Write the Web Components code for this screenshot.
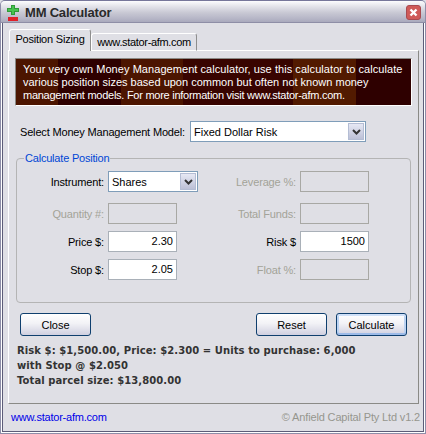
<!DOCTYPE html>
<html>
<head>
<meta charset="utf-8">
<title>MM Calculator</title>
<style>
  html, body { margin: 0; padding: 0; background: #dfdfe5; }
  body { font: 11px "Liberation Sans", Arial, sans-serif; color: #000; }
  mm-banner span { display: block; white-space: nowrap; }
</style>
</head>
<body>
<mm-window>
  <mm-tabs>
    <mm-banner>
      <span style="letter-spacing:.06px">Your very own Money Management calculator, use this calculator to calculate</span>
      <span>various position sizes based upon common but often not known money</span>
      <span style="letter-spacing:-.26px">management models. For more information visit www.stator-afm.com.</span>
    </mm-banner>
    <mm-model></mm-model>
    <mm-group>
      <mm-field label="Instrument:"><mm-select value="Shares" width="90"></mm-select></mm-field>
      <mm-field label="Leverage %:" disabled></mm-field>
      <mm-field label="Quantity #:" disabled></mm-field>
      <mm-field label="Total Funds:" disabled></mm-field>
      <mm-field label="Price $:" value="2.30"></mm-field>
      <mm-field label="Risk $" value="1500"></mm-field>
      <mm-field label="Stop $:" value="2.05"></mm-field>
      <mm-field label="Float %:" disabled></mm-field>
    </mm-group>
    <mm-actions></mm-actions>
    <mm-result></mm-result>
  </mm-tabs>
</mm-window>

<script>
class MmWindow extends HTMLElement {
  constructor() {
    super();
    this.attachShadow({ mode: 'open' }).innerHTML = `
      <style>
        :host { display: flex; flex-direction: column; width: 426px; height: 434px; box-sizing: border-box;
          background: #dfdfe5; border: 1px solid #8d8da8; border-top: 1px solid #77779a; border-radius: 5px 5px 0 0;
          box-shadow: inset 1px 0 #fff, inset -1px 0 #fff, inset 0 -1px #fff, inset 2px 0 #5c5c78, inset -2px 0 #5c5c78, inset 0 -2px #5c5c78;
          overflow: hidden; }
        .title { display: flex; align-items: flex-start; height: 21px; box-sizing: border-box; flex: none; padding: 4px 4px 0 6px; gap: 5px;
          background: linear-gradient(#fdfdfe 0, #e4e4ea 25%, #c9c9d4 55%, #b5b5c6 85%, #a9a9bc 100%);
          font: bold 13px/16px "Liberation Sans", sans-serif; letter-spacing: -.2px; color: #2a2a2a; }
        .title span { flex: 1; }
        .close { width: 15px; height: 15px; }
        .body { flex: 1; display: flex; flex-direction: column; border-top: 1px solid #8e8ea6; padding: 6px 6px 0 7px; min-height: 0; }
        .foot { display: flex; justify-content: space-between; align-items: center; height: 29px; flex: none; padding: 0 5px 3px 10px; box-sizing: border-box; }
        .foot a { color: #0000e8; text-decoration: none; letter-spacing: -.22px; }
        .foot span { color: #96968e; letter-spacing: -.15px; }
      </style>
      <div class="title">
        <svg width="13" height="16" viewBox="0 0 13 16"><path d="M4 0h4v3h4v4H8v3H4V7H0V3h4z" fill="#2f9a38"/><path d="M5 1h2v3h4v2H7v3H5V6H1V4h4z" fill="#47c24f"/><rect x="1" y="12" width="10" height="4" fill="#e0202a"/></svg>
        <span>MM Calculator</span>
        <svg class="close" viewBox="0 0 15 15"><rect x=".5" y=".5" width="14" height="14" rx="2.5" fill="#cf5a58" stroke="#a84a50"/><path d="M4.500 4.500l6 6M10.500 4.500l-6 6" stroke="#fff" stroke-width="2.400"/></svg>
      </div>
      <div class="body"><slot></slot></div>
      <div class="foot"><a href="#">www.stator-afm.com</a><span>© Anfield Capital Pty Ltd v1.2</span></div>`;
  }
}

class MmTabs extends HTMLElement {
  constructor() {
    super();
    this.attachShadow({ mode: 'open' }).innerHTML = `
      <style>
        :host { display: flex; flex-direction: column; flex: 1; min-height: 0; }
        .strip { display: flex; align-items: flex-end; height: 22px; flex: none; margin-left: 1px; position: relative; z-index: 1; margin-bottom: -1px; }
        .tab { box-sizing: border-box; border: 1px solid #8e8e8e; border-bottom: 0; border-left-color: #fff; border-top-color: #fff; border-radius: 3px 3px 0 0; background: #dfdfe5; white-space: nowrap; text-align: center; }
        .on { width: 82px; height: 22px; line-height: 19px; letter-spacing: -.2px; }
        .off { width: 106px; height: 18px; line-height: 17px; letter-spacing: -.33px; border-bottom: 1px solid #fff; }
        .panel { flex: 1; display: flex; flex-direction: column; border: 1px solid #8a8a86; border-left-color: #fff; border-top-color: #fff; padding: 7px 6px 0; min-height: 0; }
      </style>
      <div class="strip"><div class="tab on">Position Sizing</div><div class="tab off">www.stator-afm.com</div></div>
      <div class="panel"><slot></slot></div>`;
  }
}

class MmBanner extends HTMLElement {
  constructor() {
    super();
    this.attachShadow({ mode: 'open' }).innerHTML = `
      <style>
        :host { display: block; height: 48px; box-sizing: border-box; padding: 4px 8px 0 7px; color: #fff; line-height: 13px;
          border: 1px solid #8a8a86; border-right-color: #fff; border-bottom-color: #fff;
          background: linear-gradient(90deg, #4c1500 0 42px, #2e0000 42px 105px, #4c1500 105px 167px, #380400 167px 277px, #521a00 277px 340px, #2e0000 340px); }
      </style><slot></slot>`;
  }
}

class MmSelect extends HTMLElement {
  constructor() {
    super();
    const w = this.getAttribute('width') || 176;
    this.attachShadow({ mode: 'open' }).innerHTML = `
      <style>
        :host { display: flex; flex: none; box-sizing: border-box; width: ${w}px; height: 21px; border: 1px solid #7f9db9; background: #fff; align-items: center; }
        span { flex: 1; padding-left: 3px; }
        i { width: 16px; height: 17px; margin-right: 1px; display: flex; align-items: center; justify-content: center;
          background: linear-gradient(#e6e8f4, #bcc0d6); border: 1px solid #b4bdd4; box-sizing: border-box; }
      </style>
      <span>${this.getAttribute('value') || ''}</span>
      <i><svg width="9" height="6" viewBox="0 0 9 6"><path d="M1 1l3.500 3.500L8 1" fill="none" stroke="#333" stroke-width="2"/></svg></i>`;
  }
}

class MmModel extends HTMLElement {
  constructor() {
    super();
    this.attachShadow({ mode: 'open' }).innerHTML = `
      <style>
        :host { display: flex; align-items: center; justify-content: space-between; margin: 15px 46px 0 5px; height: 21px; white-space: nowrap; }
        .lbl { letter-spacing: -.17px; }
      </style>
      <span class="lbl">Select Money Management Model:</span><mm-select value="Fixed Dollar Risk" width="176"></mm-select>`;
  }
}

class MmGroup extends HTMLElement {
  constructor() {
    super();
    this.attachShadow({ mode: 'open' }).innerHTML = `
      <style>
        :host { display: block; position: relative; margin: 16px 1px 0 1px; height: 145px; box-sizing: border-box;
          border: 1px solid #b4b4b4; border-radius: 4px; padding: 12px 41px 0 0; }
        .legend { position: absolute; left: 7px; top: -8px; padding: 0 1px; background: #dfdfe5; color: #0046d5; line-height: 14px; letter-spacing: -.2px; }
        .grid { display: grid; grid-template-columns: 160px 1fr; grid-template-rows: 25px 21px 21px 21px; row-gap: 7px; }
      </style>
      <span class="legend">Calculate Position</span>
      <div class="grid"><slot></slot></div>`;
  }
}

class MmField extends HTMLElement {
  constructor() {
    super();
    const off = this.hasAttribute('disabled');
    const val = this.getAttribute('value') || '';
    this.attachShadow({ mode: 'open' }).innerHTML = `
      <style>
        :host { display: flex; align-items: center; justify-content: flex-end; gap: 4px; height: 21px; }
        label { color: ${off ? '#a3a398' : '#000'}; white-space: nowrap; letter-spacing: -.15px; }
        ::slotted(mm-select) { margin-right: -21px; }
        .box { box-sizing: border-box; width: 69px; height: 21px; border: 1px solid ${off ? '#a8a8a4' : '#a9b0b8'}; background: ${off ? 'transparent' : '#fff'}; text-align: right; padding-right: 3px; line-height: 19px; }
      </style>
      <label>${this.getAttribute('label')}</label>
      <slot><div class="box">${val}</div></slot>`;
  }
}

class MmActions extends HTMLElement {
  constructor() {
    super();
    this.attachShadow({ mode: 'open' }).innerHTML = `
      <style>
        :host { display: flex; gap: 9px; margin: 10px 5px 0 5px; }
        button { box-sizing: border-box; width: 71px; height: 23px; padding: 0; font: 11px "Liberation Sans", Arial, sans-serif; color: #000;
          border: 1px solid #0f3f6e; border-radius: 3px; background: linear-gradient(#fff 0, #f2f2f6 45%, #d0d0e0 100%); }
        .first { margin-right: auto; }
        .def { box-shadow: inset 0 2px #cfe0f8, inset 0 -2px #9dbbe8, inset 2px 0 #bcd3f2, inset -2px 0 #bcd3f2; }
      </style>
      <button class="first">Close</button><button>Reset</button><button class="def">Calculate</button>`;
  }
}

class MmResult extends HTMLElement {
  constructor() {
    super();
    this.attachShadow({ mode: 'open' }).innerHTML = `
      <style>
        :host { display: block; margin: 7px 0 0 2px; font: bold 10px/15px "DejaVu Sans", sans-serif; letter-spacing: .08px; color: #333; white-space: nowrap; }
      </style>
      Risk $: $1,500.00, Price: $2.300 = Units to purchase: 6,000<br>with Stop @ $2.050<br>Total parcel size: $13,800.00`;
  }
}

customElements.define('mm-window', MmWindow);
customElements.define('mm-tabs', MmTabs);
customElements.define('mm-banner', MmBanner);
customElements.define('mm-select', MmSelect);
customElements.define('mm-model', MmModel);
customElements.define('mm-group', MmGroup);
customElements.define('mm-field', MmField);
customElements.define('mm-actions', MmActions);
customElements.define('mm-result', MmResult);
</script>
</body>
</html>
